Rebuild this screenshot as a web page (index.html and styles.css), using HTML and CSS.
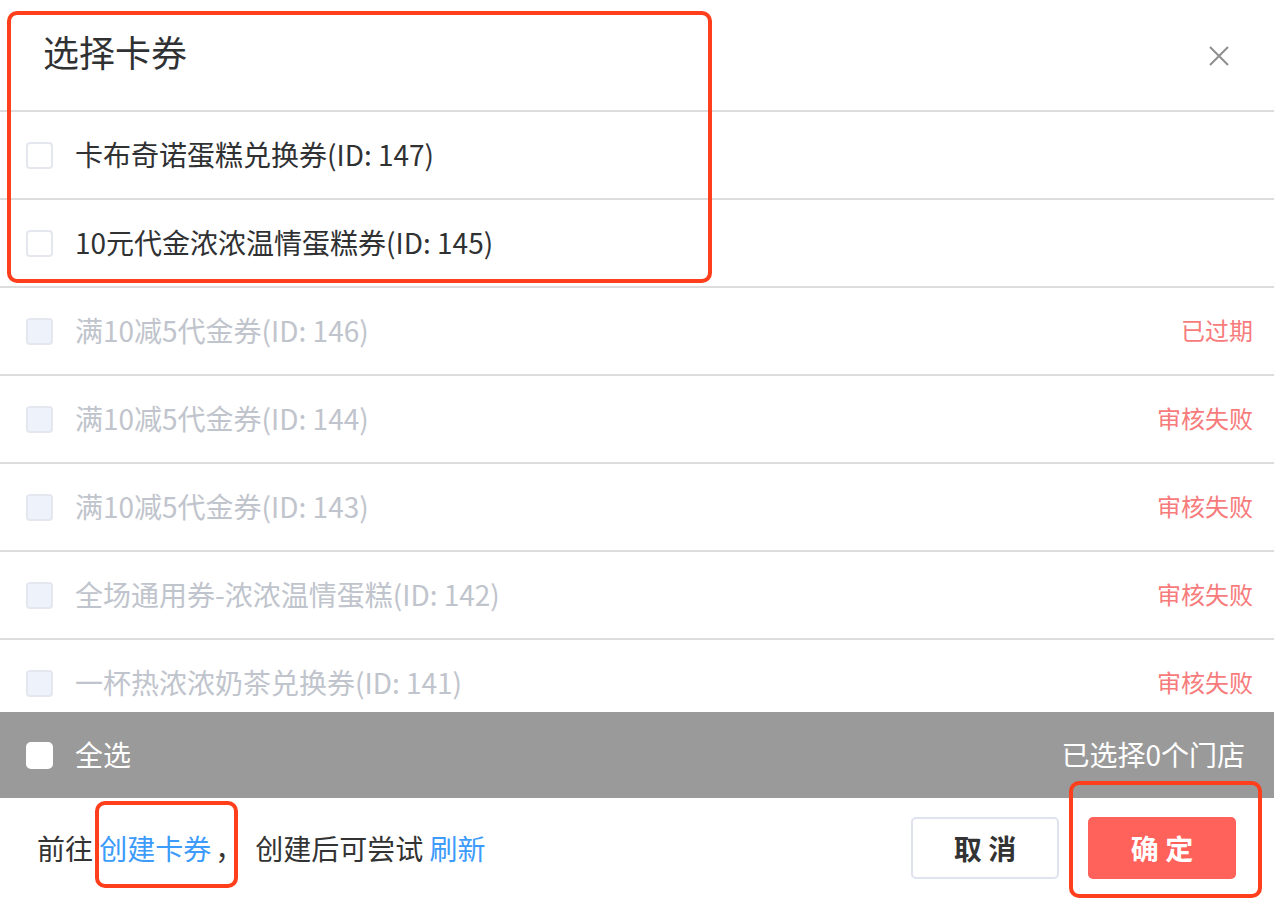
FILE: index.html
```html
<!DOCTYPE html>
<html lang="zh-CN">
<head>
<meta charset="utf-8">
<title>选择卡券</title>
<link rel="stylesheet" href="styles.css">
</head>
<body>
<div class="dialog">
  <div class="header">
    <div class="title">选择卡券</div>
    <div class="close">
      <svg width="22" height="22" viewBox="0 0 22 22"><path d="M2 2L20 20M20 2L2 20" stroke="#8e8e8e" stroke-width="2" fill="none"/></svg>
    </div>
  </div>
  <div class="list">
    <div class="row"><span class="cb"></span><span class="label">卡布奇诺蛋糕兑换券(ID: 147)</span></div>
    <div class="row"><span class="cb"></span><span class="label">10元代金浓浓温情蛋糕券(ID: 145)</span></div>
    <div class="row disabled"><span class="cb"></span><span class="label">满10减5代金券(ID: 146)</span><span class="status">已过期</span></div>
    <div class="row disabled"><span class="cb"></span><span class="label">满10减5代金券(ID: 144)</span><span class="status">审核失败</span></div>
    <div class="row disabled"><span class="cb"></span><span class="label">满10减5代金券(ID: 143)</span><span class="status">审核失败</span></div>
    <div class="row disabled"><span class="cb"></span><span class="label">全场通用券-浓浓温情蛋糕(ID: 142)</span><span class="status">审核失败</span></div>
    <div class="row disabled"><span class="cb"></span><span class="label">一杯热浓浓奶茶兑换券(ID: 141)</span><span class="status">审核失败</span></div>
  </div>
  <div class="selbar">
    <span class="cb white"></span><span class="label">全选</span>
    <span class="count">已选择0个门店</span>
  </div>
  <div class="footer">
    <div class="hint">前往 <span class="link">创建卡券</span><span class="comma">，</span>创建后可尝试 <span class="link">刷新</span></div>
    <div class="btns">
      <button class="btn cancel">取 消</button>
      <button class="btn ok">确 定</button>
    </div>
  </div>
  <div class="mark mark1"></div>
  <div class="mark mark2"></div>
  <div class="mark mark3"></div>
</div>
</body>
</html>
```
FILE: styles.css
```css
* { box-sizing: border-box; }
html, body { margin: 0; padding: 0; background: #fff; }
body {
  width: 1274px;
  height: 904px;
  overflow: hidden;
  font-family: "Noto Sans CJK SC", "Noto Sans", sans-serif;
  color: #303133;
}
.dialog {
  position: relative;
  width: 1274px;
  height: 904px;
  display: flex;
  flex-direction: column;
}
.header {
  height: 112px;
  flex: none;
  border-bottom: 2px solid #dcdcdc;
  display: flex;
  align-items: flex-start;
  justify-content: space-between;
  padding: 0 44px 0 43px;
}
.title {
  font-size: 36px;
  line-height: 36px;
  margin-top: 33px;
  color: #303133;
}
.close {
  margin-top: 45px;
  width: 22px;
  height: 22px;
}
.close svg { display: block; }
.list {
  height: 600px;
  flex: none;
  overflow: hidden;
}
.row {
  height: 88px;
  border-bottom: 2px solid #dcdcdc;
  display: flex;
  align-items: center;
  padding: 0 21px 0 26px;
  font-size: 28px;
}
.cb {
  width: 27px;
  height: 27px;
  border: 2px solid #e4e7ed;
  border-radius: 4px;
  background: #fff;
  flex: none;
  margin-right: 22px;
}
.label { line-height: 1; }
.row .label, .row .status { margin-top: -3px; }
.row .label { color: #303133; }
.row.disabled .cb { background: #eef2fb; border-color: #e4e7ed; }
.row.disabled .label { color: #c0c4cc; }
.status {
  margin-left: auto;
  color: #f77b7b;
  font-size: 24px;
}
.selbar {
  height: 86px;
  flex: none;
  background: #9a9a9a;
  display: flex;
  align-items: center;
  padding: 0 29px 0 26px;
  font-size: 28px;
  color: #fff;
}
.cb.white { border-color: #fff; border-radius: 5px; }
.selbar .label { color: #fff; margin-top: -2px; }
.count { margin-left: auto; color: #fff; margin-top: -2px; }
.footer {
  flex: 1;
  display: flex;
  align-items: center;
  justify-content: space-between;
  padding: 0 38px 0 37px;
}
.hint {
  font-size: 28px;
  color: #333;
  margin-top: -6px;
}
.link { color: #3c9bfb; }
.comma { margin-left: 4px; margin-right: 12px; }
.btns {
  display: flex;
  gap: 29px;
  margin-top: -6px;
}
.btn {
  width: 148px;
  height: 62px;
  border-radius: 5px;
  font-family: "Noto Sans CJK SC", sans-serif;
  font-size: 28px;
  font-weight: 600;
  cursor: pointer;
  padding: 0;
}
.cancel {
  background: #fff;
  border: 2px solid #dfe3ee;
  color: #333;
}
.ok {
  background: #ff625a;
  border: none;
  color: #fff;
}
.mark {
  position: absolute;
  border: 4px solid #ff3f1c;
  border-radius: 10px;
  pointer-events: none;
}
.mark1 { left: 7px; top: 11px; width: 705px; height: 272px; }
.mark2 { left: 95px; top: 801px; width: 143px; height: 87px; }
.mark3 { left: 1069px; top: 781px; width: 193px; height: 117px; }
```
